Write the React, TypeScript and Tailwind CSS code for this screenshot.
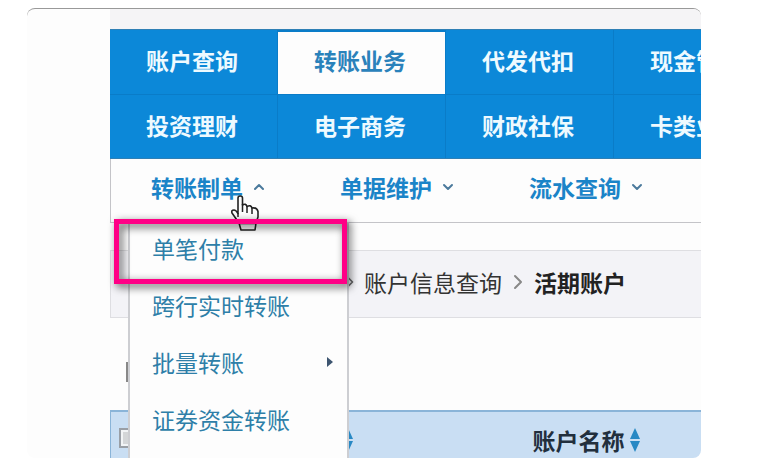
import { ReactNode } from "react";
import { ChevronDown, ChevronRight, ChevronUp } from "lucide-react";

interface SubItem {
  label: string;
  open?: boolean;
}

interface MenuItem {
  label: string;
  nested?: boolean;
}

const NAV = ["账户查询", "转账业务", "代发代扣", "现金管理", "投资理财", "电子商务", "财政社保", "卡类业务"];

const ACTIVE = "转账业务";

const SUB_NAV: SubItem[] = [
  { label: "转账制单", open: true },
  { label: "单据维护" },
  { label: "流水查询" },
];

const MENU: MenuItem[] = [
  { label: "单笔付款" },
  { label: "跨行实时转账" },
  { label: "批量转账", nested: true },
  { label: "证券资金转账" },
];

function SortIcon() {
  return (
    <svg className="w-3 h-6 shrink-0" viewBox="0 0 12 24" fill="#2788c4">
      <path d="M6 0L11 11H1z" />
      <path d="M6 24L1 13H11z" />
    </svg>
  );
}

function HandCursor() {
  return (
    <svg className="absolute left-[120px] top-9 w-7 h-9 pointer-events-none" viewBox="0 0 28 36">
      <path
        d="M8 28L1 18Q0 15 3 15Q5 15 7 18.500V3Q7 1 9.200 1Q11.500 1 11.500 3V10Q15 8 16 11.500Q20 9.500 21 13Q26 12 27 16.500V22L25 28L24 35H10Z"
        fill="#fdfdfd"
        stroke="#222"
        strokeWidth="1.6"
        strokeLinejoin="round"
      />
      <path d="M11.500 9V17M16 11V18M21 13V19M7 18V22M8 28.500H25" fill="none" stroke="#222" strokeWidth="1.5" />
    </svg>
  );
}

function DropdownMenu({ children }: { children: ReactNode }) {
  return (
    <div className="absolute left-[17px] top-full w-[221px] h-[260px] bg-[#fdfdfd] border-x-2 border-[#cdced2]">
      {children}
    </div>
  );
}

export default function App() {
  return (
    <div className="min-h-screen bg-white pl-[27px] pr-[57px] pt-2 text-[23px] leading-8 font-['Noto_Sans_CJK_SC',sans-serif]">
      <div className="h-[450px] overflow-hidden rounded-lg border-t border-[#999] bg-[#fdfdfd] pl-[83px]">
        <div className="h-5 bg-[#f5f4f6]" />

        <nav className="grid grid-cols-[repeat(4,168px)] border-y border-[#2f7fb5] bg-[#0c88d8]">
          {NAV.map((label, i) => (
            <button
              key={label}
              className={`pl-9 text-left font-bold whitespace-nowrap border-r border-[#0a7cc8] ${
                i < 4 ? "h-[65px] border-b" : "h-[63px]"
              } ${
                label === ACTIVE ? "border-t-2 bg-[#fdfdfd] pb-1.5 text-[#2a82bb]" : "pb-1 text-[#eefaff]"
              }`}
            >
              {label}
            </button>
          ))}
        </nav>

        <div className="relative z-10 flex h-16 border-l border-b border-[#c4c4c8] bg-[#fdfdfd] pl-10">
          {SUB_NAV.map((item) => (
            <button
              key={item.label}
              className="flex w-[189px] shrink-0 items-center gap-2 pb-2 font-bold text-[#1b84c8] whitespace-nowrap"
            >
              {item.label}
              {item.open ? (
                <ChevronUp className="size-4" strokeWidth={3} color="#4b7a9c" />
              ) : (
                <ChevronDown className="size-4" strokeWidth={3} color="#4b7a9c" />
              )}
            </button>
          ))}
          <DropdownMenu>
            {MENU.map((item) => (
              <button
                key={item.label}
                className="flex h-[57px] w-full items-center justify-between pb-1.5 pl-[22px] pr-3.5 text-[#2e7fa8] whitespace-nowrap"
              >
                {item.label}
                {item.nested && (
                  <svg className="w-[6px] h-[10px]" viewBox="0 0 6 10" fill="#3d5570">
                    <path d="M0 0L6 5L0 10z" />
                  </svg>
                )}
              </button>
            ))}
          </DropdownMenu>
          <HandCursor />
          {/* Highlight round the first entry */}
          <div className="absolute left-[3px] top-[60px] w-[233px] h-[65px] border-5 border-[#ff0086] drop-shadow-[3px_3px_4px_rgba(0,0,0,0.7)] pointer-events-none" />
        </div>

        <div className="mt-[27px] flex h-[68px] items-center border-y border-l border-[#dedee2] bg-[#f3f3f7] pb-1 pl-[229px] text-[#333] whitespace-nowrap">
          <ChevronRight className="-mr-1 size-5 shrink-0" color="#666" />
          <a href="#info" className="ml-2">账户信息查询</a>
          <ChevronRight className="mx-1 size-6 shrink-0" strokeWidth={2} color="#888" />
          <span className="font-bold text-[#222]">活期账户</span>
        </div>

        <div className="flex h-[92px] items-center pl-4 pt-4">
          <input type="checkbox" aria-label="全部" className="size-5 appearance-none border-x-2 border-[#888]" />
        </div>

        <table className="w-full table-fixed border-t-2 border-l border-[#8ab4d8] bg-[#c9def3] text-[#222f3d]">
          <thead>
            <tr className="h-16">
              <th className="w-[231px] pl-2 pt-4 align-top">
                <div className="flex items-center">
                  <input
                    type="checkbox"
                    aria-label="全选"
                    className="size-5 appearance-none border-2 border-[#9a9fa6] bg-[#d4d6d8] ring-2 ring-inset ring-[#f2f4f6]"
                  />
                </div>
              </th>
              <th className="pt-3 align-top">
                <div className="flex items-center whitespace-nowrap">
                  <SortIcon />
                  <span className="ml-[179px] mr-1">账户名称</span>
                  <SortIcon />
                </div>
              </th>
            </tr>
          </thead>
        </table>
      </div>
    </div>
  );
}
